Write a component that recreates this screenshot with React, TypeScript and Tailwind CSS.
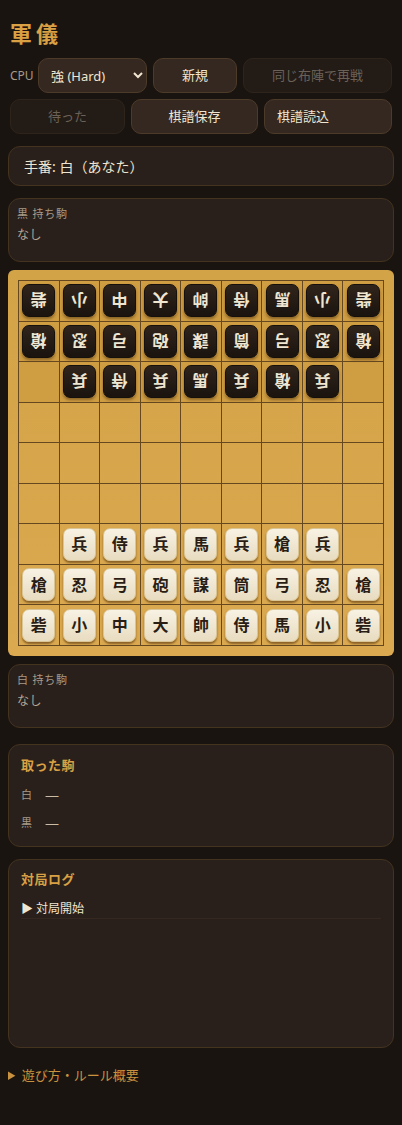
import React from "react";

type Piece = { label: string; side: "black" | "white" } | null;

const black = (label: string): Piece => ({ label, side: "black" });
const white = (label: string): Piece => ({ label, side: "white" });

const backRow = ["砦", "小", "中", "大", "帥", "侍", "馬", "小", "砦"];
const midRow = ["槍", "忍", "弓", "砲", "謀", "筒", "弓", "忍", "槍"];
const frontRow = ["", "兵", "侍", "兵", "馬", "兵", "槍", "兵", ""];

const toRow = (labels: string[], make: (l: string) => Piece) =>
  labels.map((l) => (l ? make(l) : null));

const board: Piece[][] = [
  toRow(backRow, black),
  toRow(midRow, black),
  toRow(frontRow, black),
  Array(9).fill(null),
  Array(9).fill(null),
  Array(9).fill(null),
  toRow(frontRow, white),
  toRow(midRow, white),
  toRow(backRow, white),
];

const HandPanel = ({ title }: { title: string }) => (
  <div className="h-[64px] rounded-[12px] border border-[#43331f] bg-[#2a201b] px-[8px] pt-[7px]">
    <div className="text-[11px] leading-[16px] tracking-[0.8px] text-[#a89a88]">{title}</div>
    <div className="mt-[4px] text-[12px] leading-[18px] tracking-[0.5px] text-[#b5a795]">なし</div>
  </div>
);

const PieceChip = ({ piece }: { piece: NonNullable<Piece> }) =>
  piece.side === "black" ? (
    <div className="flex h-[33px] w-[33px] rotate-180 items-center justify-center rounded-[7px] border border-[#15100c] bg-gradient-to-b from-[#1a130e] to-[#30251c] text-[16px] font-bold leading-none text-[#efe6d2] shadow-[0_-2px_3px_rgba(90,60,20,0.6)]">
      {piece.label}
    </div>
  ) : (
    <div className="flex h-[33px] w-[33px] items-center justify-center rounded-[7px] border border-[#d9c595] bg-gradient-to-b from-[#f8f2e4] to-[#e8dcc0] text-[16px] font-bold leading-none text-[#2a1d14] shadow-[0_2px_2px_rgba(120,80,30,0.8)]">
      {piece.label}
    </div>
  );

const App = () => {
  return (
    <div
      className="min-h-[1125px] bg-[#1a1410] px-[8px] pt-[18px] text-[#efe6d2]"
      style={{ fontFamily: '"Noto Sans", "Noto Sans CJK JP", sans-serif' }}
    >
      <h1 className="ml-[2px] text-[22px] font-bold leading-[30px] tracking-[4px] text-[#d9a044]">軍儀</h1>

      <div className="mt-[10px] flex items-center gap-[6px] px-[2px]">
        <span className="w-[22px] text-[12px] text-[#a89a88]">CPU</span>
        <select className="h-[35px] w-[109px] rounded-[10px] border border-[#4d3b2a] bg-[#352820] pl-[8px] text-[13px] text-[#efe6d2]">
          <option>強 (Hard)</option>
        </select>
        <button className="h-[35px] w-[84px] rounded-[10px] border border-[#4d3b2a] bg-[#352820] text-[13px] text-[#efe6d2]">
          新規
        </button>
        <button disabled className="h-[35px] flex-1 rounded-[10px] border border-[#2e241c] bg-[#231b16] text-[13px] text-[#6b6156]">
          同じ布陣で再戦
        </button>
      </div>

      <div className="mt-[6px] flex gap-[6px] px-[2px]">
        <button disabled className="h-[35px] w-[115px] rounded-[10px] border border-[#2e241c] bg-[#231b16] text-[13px] text-[#6b6156]">
          待った
        </button>
        <button className="h-[35px] w-[127px] rounded-[10px] border border-[#4d3b2a] bg-[#352820] text-[13px] text-[#efe6d2]">
          棋譜保存
        </button>
        <label className="flex h-[35px] flex-1 items-center rounded-[10px] border border-[#4d3b2a] bg-[#352820] pl-[12px] text-[13px] text-[#efe6d2]">
          棋譜読込
        </label>
      </div>

      <div className="mt-[12px] flex h-[40px] items-center rounded-[12px] border border-[#43331f] bg-[#2a201b] pl-[15px] text-[14px] text-[#efe6d2]">
        手番: 白（あなた）
      </div>

      <div className="mt-[12px]">
        <HandPanel title="黒 持ち駒" />
      </div>

      <div className="mt-[8px] rounded-[6px] bg-gradient-to-b from-[#d3a348] to-[#dba94f] p-[10px]">
        <div className="grid grid-cols-9 border-l border-t border-[#654820]">
          {board.flat().map((piece, i) => (
            <div
              key={i}
              className={
                i < 27
                  ? "flex h-[40.55px] items-center justify-center border-b border-r border-[#654820] bg-[#cf9d42]"
                  : "flex h-[40.55px] items-center justify-center border-b border-r border-[#654820]"
              }
            >
              {piece ? <PieceChip piece={piece} /> : null}
            </div>
          ))}
        </div>
      </div>

      <div className="mt-[8px]">
        <HandPanel title="白 持ち駒" />
      </div>

      <div className="mt-[16px] h-[103px] rounded-[12px] border border-[#43331f] bg-[#2a201b] px-[12px] pt-[11px]">
        <div className="text-[13px] font-bold leading-[18px] tracking-[0.5px] text-[#d9a044]">取った駒</div>
        <div className="mt-[13px] flex h-[16px] items-center text-[11px] text-[#a89a88]">
          <span className="w-[24px]">白</span>
          <span className="text-[14px] font-light text-[#c9bba5]">—</span>
        </div>
        <div className="mt-[12px] flex h-[16px] items-center text-[11px] text-[#a89a88]">
          <span className="w-[24px]">黒</span>
          <span className="text-[14px] font-light text-[#c9bba5]">—</span>
        </div>
      </div>

      <div className="mt-[12px] h-[189px] rounded-[12px] border border-[#43331f] bg-[#2a201b] px-[12px] pt-[10px]">
        <div className="text-[13px] font-bold leading-[18px] tracking-[0.5px] text-[#d9a044]">対局ログ</div>
        <div className="mt-[12px] border-b border-[#352820] text-[12px] leading-[18px] text-[#efe6d2]">▶ 対局開始</div>
      </div>

      <details className="mt-[18px] text-[13px] leading-[18px] text-[#c9923f]">
        <summary className="cursor-pointer">遊び方・ルール概要</summary>
      </details>
    </div>
  );
};

export default App;
